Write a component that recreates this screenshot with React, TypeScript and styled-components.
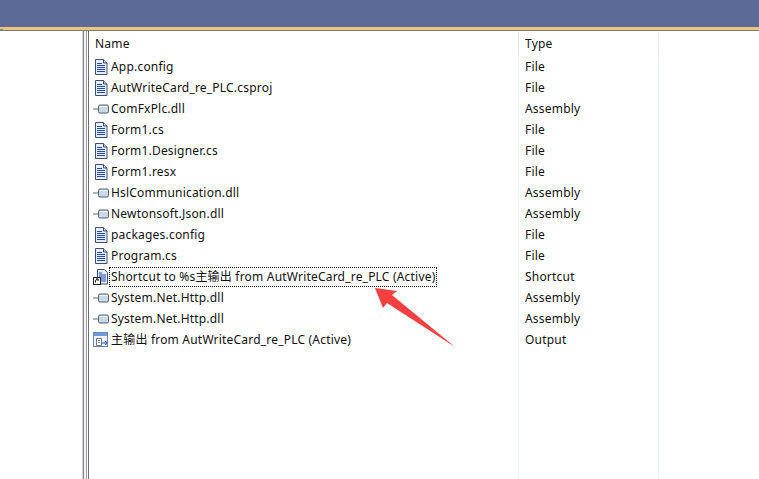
import React from 'react';
import styled, { createGlobalStyle } from 'styled-components';

type Kind = 'doc' | 'ref' | 'link' | 'output';

interface Row {
  name: string;
  type: string;
  icon: Kind;
  focused?: boolean;
}

const rows: Row[] = [
  { name: 'App.config', type: 'File', icon: 'doc' },
  { name: 'AutWriteCard_re_PLC.csproj', type: 'File', icon: 'doc' },
  { name: 'ComFxPlc.dll', type: 'Assembly', icon: 'ref' },
  { name: 'Form1.cs', type: 'File', icon: 'doc' },
  { name: 'Form1.Designer.cs', type: 'File', icon: 'doc' },
  { name: 'Form1.resx', type: 'File', icon: 'doc' },
  { name: 'HslCommunication.dll', type: 'Assembly', icon: 'ref' },
  { name: 'Newtonsoft.Json.dll', type: 'Assembly', icon: 'ref' },
  { name: 'packages.config', type: 'File', icon: 'doc' },
  { name: 'Program.cs', type: 'File', icon: 'doc' },
  { name: 'Shortcut to %s主输出 from AutWriteCard_re_PLC (Active)', type: 'Shortcut', icon: 'link', focused: true },
  { name: 'System.Net.Http.dll', type: 'Assembly', icon: 'ref' },
  { name: 'System.Net.Http.dll', type: 'Assembly', icon: 'ref' },
  { name: '主输出 from AutWriteCard_re_PLC (Active)', type: 'Output', icon: 'output' },
];

const GlobalStyle = createGlobalStyle`
  html, body {
    margin: 0;
    padding: 0;
    background: #fff;
    overflow: hidden;
  }
`;

const Page = styled.div`
  position: relative;
  width: 759px;
  height: 479px;
  overflow: hidden;
  display: flex;
  flex-direction: column;
  font-family: 'Noto Sans', 'Noto Sans CJK SC', sans-serif;
  font-size: 12px;
  letter-spacing: 0.2px;
  color: #111;
`;

const TitleBar = styled.div`
  height: 27px;
  flex: none;
  background: #5c6a97;
`;

const Accent = styled.div`
  height: 3px;
  flex: none;
  background: #ecc27c;
`;

const Body = styled.div`
  flex: 1;
  display: flex;
  min-height: 0;
  border-top: 1px solid #7d7d7d;
`;

const LeftPane = styled.div`
  width: 82px;
  flex: none;
  border-right: 1px solid #d0d0d0;
`;

const Splitter = styled.div`
  width: 2px;
  flex: none;
  border-left: 1px solid #8a8a8a;
  border-right: 1px solid #a0a0a0;
  background: #f1f1f6;
`;

const ListPane = styled.div`
  flex: 1;
  min-width: 0;
  margin-left: 1px;
  border-left: 1px solid #6e6e6e;
  display: flex;
  flex-direction: column;
`;

const Grid = styled.div`
  flex: 1;
  display: grid;
  grid-template-columns: 431px 140px;
  grid-auto-rows: 21px;
  align-content: start;
  padding-top: 3px;
`;

const Cell = styled.div`
  display: flex;
  align-items: center;
  height: 21px;
  white-space: nowrap;
`;

const HeadName = styled(Cell)`
  padding-left: 6px;
  margin-top: -1px;
`;

const HeadType = styled(Cell)`
  padding-left: 5px;
  margin-top: -1px;
`;

const NameCell = styled(Cell)`
  padding-left: 4px;
  gap: 1px;
  margin-top: 1px;
`;

const TypeCell = styled(Cell)`
  padding-left: 5px;
  margin-top: 1px;
`;

const Label = styled.span<{ $focused?: boolean }>`
  padding: 1px;
  line-height: 16px;
  outline: ${p => (p.$focused ? '1px dotted #111' : 'none')};
`;

const Guides = styled.div`
  position: absolute;
  top: 32px;
  bottom: 0;
  left: 518px;
  width: 139px;
  border-left: 1px solid #eef2fa;
  border-right: 1px solid #eef2fa;
  pointer-events: none;

  &::before,
  &::after {
    content: '';
    position: absolute;
    top: 0;
    height: 23px;
    width: 1px;
    background: #e4e4e4;
  }

  &::before {
    left: -1px;
  }

  &::after {
    right: -1px;
  }
`;

const Notch = styled.div`
  position: absolute;
  left: 0;
  top: 29px;
  width: 3px;
  height: 1px;
  background: #8a8a8a;
`;

const Arrow = styled.svg`
  position: absolute;
  left: 370px;
  top: 284px;
`;

const DocIcon = () => (
  <svg width="16" height="16" viewBox="-1 0 16 16">
    <path d="M1.5.5h8l3.5 3.5v11.5h-11.5z" fill="#e6edf8" stroke="#3f4d6b" />
    <path d="M9.5.5v3.5h3.5" fill="#c9d6ea" stroke="#3f4d6b" />
    <path d="M3 4.5h5M3 6.5h8M3 8.5h8M3 10.5h8M3 12.5h8" stroke="#2149b8" />
  </svg>
);

const RefIcon = () => (
  <svg width="16" height="16" viewBox="-1 0 16 16">
    <path d="M-1 8h3" stroke="#a9b6c8" strokeWidth="2" />
    <path d="M2 8h2.5" stroke="#5f6f84" strokeWidth="1" />
    <rect x="4.5" y="4" width="10" height="8" rx="1.5" fill="#cbd8e6" stroke="#4f5f72" />
    <path d="M6 5.5h7" stroke="#f4f8fc" />
  </svg>
);

const LinkIcon = () => (
  <svg width="16" height="16" viewBox="-1 0 16 16">
    <path d="M3.5.5h7l3 3v11.5h-10z" fill="#e6edf8" stroke="#3f4d6b" />
    <path d="M5 6h7M5 8h7M5 10h7M5 12h7M5 4h3" stroke="#2149b8" />
    <rect x="-1" y="8" width="8" height="8" fill="#fff" />
    <rect x="-.5" y="8.5" width="7" height="7" fill="#fff" stroke="#222" />
    <path d="M1.5 13.5v-2l2-1.5M2 10h2v2" fill="none" stroke="#111" />
  </svg>
);

const OutputIcon = () => (
  <svg width="16" height="16" viewBox="0 0 16 16">
    <rect x=".5" y=".5" width="14" height="14" fill="#eef3fa" stroke="#6c86b0" />
    <rect x="1" y="1" width="13" height="3" fill="#6f9ad6" />
    <path d="M3.5 6.5h5v7h-5z" fill="#fff" stroke="#6a7688" />
    <path d="M5 8.5h2M5 10.5h2" stroke="#6a7688" />
    <path d="M9 11h5M12 9l2.5 2-2.5 2" fill="none" stroke="#2149b8" />
  </svg>
);

const icons: Record<Kind, React.FC> = {
  doc: DocIcon,
  ref: RefIcon,
  link: LinkIcon,
  output: OutputIcon,
};

const App: React.FC = () => {
  return (
    <Page>
      <GlobalStyle />
      <TitleBar />
      <Accent />
      <Body>
        <LeftPane />
        <Splitter />
        <ListPane>
          <Grid>
            <HeadName>Name</HeadName>
            <HeadType>Type</HeadType>
            {rows.map((row, i) => {
              const Icon = icons[row.icon];
              return (
                <React.Fragment key={i}>
                  <NameCell>
                    <Icon />
                    <Label $focused={row.focused}>{row.name}</Label>
                  </NameCell>
                  <TypeCell>{row.type}</TypeCell>
                </React.Fragment>
              );
            })}
          </Grid>
        </ListPane>
      </Body>
      <Notch />
      <Guides />
      <Arrow width="90" height="70" viewBox="0 0 90 70">
        <path d="M5 4L27 7 22 11 85 63 17 19 13 24z" fill="#f4403f" />
      </Arrow>
    </Page>
  );
};

export default App;
